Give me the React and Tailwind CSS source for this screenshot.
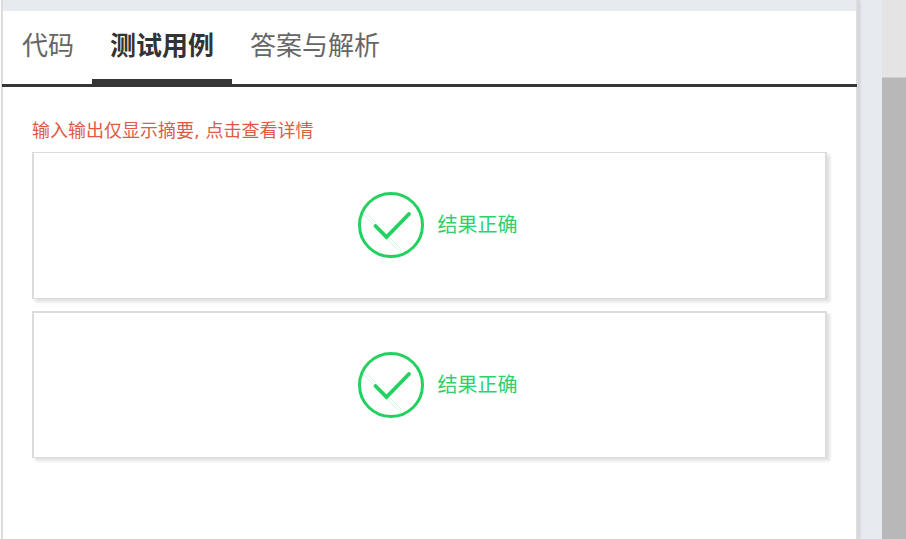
import { useState } from 'react';

const tabs = [
  { id: 'code', label: '代码' },
  { id: 'cases', label: '测试用例' },
  { id: 'answer', label: '答案与解析' },
];

const results = [
  { id: 1, text: '结果正确', border: 'border-t' },
  { id: 2, text: '结果正确', border: 'border-t-2' },
];

function CheckIcon() {
  return (
    <svg className="h-[66px] w-[66px] shrink-0" viewBox="0 0 66 66" fill="none" aria-hidden="true">
      <path d="M5 22L17 34M7 20L18 31M29 47L40 58M32 46L44 58" stroke="#a9efc1" strokeWidth="0.5" />
      <circle cx="33" cy="33" r="31.5" fill="none" stroke="#22d15f" strokeWidth="3" />
      <path d="M17.5 34L28.5 45L51 22" stroke="#22d15f" strokeWidth="3.8" strokeLinecap="round" />
    </svg>
  );
}

function ResultCard({ result }) {
  return (
    <button
      type="button"
      className={`flex h-[147px] w-full items-center justify-center gap-[14px] border-x-2 border-b ${result.border} border-[#dcdcdc] bg-white pb-px pl-4 text-[20px] leading-6 text-[#2fd06a] shadow-[3px_3px_3px_rgba(0,0,0,0.12)]`}
    >
      <CheckIcon />
      <span>{result.text}</span>
    </button>
  );
}

export default function App() {
  const [active, setActive] = useState('cases');

  return (
    <div className="flex h-screen overflow-hidden bg-white font-['DejaVu_Sans','Noto_Sans_CJK_SC',sans-serif]">
      <div className="ml-px flex min-w-0 flex-1 bg-[#e7eaef] pr-6">
        <main className="flex min-w-0 flex-1 flex-col border-x-2 border-[#dcdcde] bg-white shadow-[2px_0_3px_rgba(0,0,0,0.12)]">
          <div className="h-[11px] shrink-0 bg-[#e7eaef]"></div>
          <nav role="tablist" className="-mx-px flex h-[76px] shrink-0 items-stretch border-b-[3px] border-[#363636] pl-[2px]">
            {tabs.map((tab) => (
              <button
                key={tab.id}
                type="button"
                role="tab"
                aria-selected={active === tab.id}
                onClick={() => setActive(tab.id)}
                className={
                  active === tab.id
                    ? 'border-b-[5px] border-[#363636] px-[18px] pt-[2px] text-[26px] leading-8 font-bold text-[#333333]'
                    : 'border-b-[5px] border-transparent px-[18px] pt-[2px] text-[26px] leading-8 text-[#666666]'
                }
              >
                {tab.label}
              </button>
            ))}
          </nav>
          <section className="px-[29px] pt-8">
            <p className="mb-[9px] text-[18px] leading-6 text-[#e05a45]">输入输出仅显示摘要, 点击查看详情</p>
            <div className="flex flex-col gap-3">
              {results.map((result) => (
                <ResultCard key={result.id} result={result} />
              ))}
            </div>
          </section>
        </main>
      </div>
      <div className="flex w-6 shrink-0 flex-col bg-[#e4e4e4] pt-[77px]">
        <div className="flex-1 border-t border-[#cfcfcf] bg-[#b8b8b8]"></div>
      </div>
    </div>
  );
}
